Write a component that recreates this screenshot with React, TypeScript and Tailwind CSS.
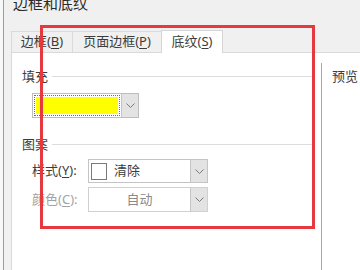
import React from 'react';

const Chevron = () => (
  <svg width="9" height="5" viewBox="0 0 9 5" fill="none">
    <path d="M0.5 0.5L4.5 4.5L8.5 0.5" stroke="#7a7a7a" strokeWidth="1" />
  </svg>
);

const Mn = ({ text, k }: { text: string; k: string }) => (
  <span>
    {text}(<span className="underline underline-offset-2">{k}</span>)
  </span>
);

const GroupHeader = ({ label }: { label: string }) => (
  <div className="flex items-center gap-[4px] pr-[7px]">
    <span className="leading-[18px]">{label}</span>
    <div className="flex-1 h-px bg-[#dcdcdc]" />
  </div>
);

const DropArrow = () => (
  <div className="w-[17px] self-stretch flex items-center justify-center bg-[#e3e3e3] border-l border-[#c4c4c4]">
    <Chevron />
  </div>
);

export default function App() {
  return (
    <div className="relative w-[360px] h-[270px] overflow-hidden bg-[#f0f0f0] text-[13px] text-[#3c3c3c] font-['Noto_Sans','Noto_Sans_CJK_SC',sans-serif] flex">
      {/* window edge */}
      <div className="w-[4px] bg-[#f7f7f7] border-r border-[#9c9c9c]" />

      <div className="flex-1 flex flex-col">
        {/* title */}
        <div className="h-[27px] pl-[9px] text-[15px] leading-[20px] -mt-[7px] text-[#2a2a2a]">
          边框和底纹
        </div>

        {/* tabs */}
        <div className="flex pl-[7px] h-[23px] mt-[9px] items-end">
          <div className="h-[21px] w-[61px] flex items-center justify-center border-t border-l border-[#dadada] bg-[#f0f0f0]">
            <Mn text="边框" k="B" />
          </div>
          <div className="h-[21px] w-[89px] flex items-center justify-center border-t border-l border-[#dadada] bg-[#f0f0f0]">
            <Mn text="页面边框" k="P" />
          </div>
          <div className="h-[23px] w-[62px] flex items-center justify-center border-t border-l border-r border-[#d6d6d6] bg-white -mb-px relative z-10">
            <Mn text="底纹" k="S" />
          </div>
        </div>

        {/* panel */}
        <div className="flex-1 ml-[7px] bg-white border-t border-l border-[#d9d9d9] flex">
          <div className="w-[309px] pl-[10px] pt-[14px] flex flex-col">
            <GroupHeader label="填充" />
            <div className="ml-[10px] mt-[8px] w-[107px] h-[25px] flex items-stretch border border-[#bdbdbd] bg-white">
              <div className="flex-1 p-[1px]">
                <div className="w-full h-full border border-dotted border-[#6f6f6f] p-[1px]">
                  <div className="w-full h-full bg-[#ffff00]" />
                </div>
              </div>
              <DropArrow />
            </div>

            <div className="mt-[17px]">
              <GroupHeader label="图案" />
            </div>

            <div className="ml-[10px] mt-[6px] flex flex-col gap-[4px]">
              <div className="flex items-center">
                <span className="w-[56px]">
                  <Mn text="样式" k="Y" />:
                </span>
                <div className="w-[120px] h-[24px] flex items-stretch border border-[#c4c4c4]">
                  <div className="flex-1 flex items-center pl-[2px] gap-[7px]">
                    <div className="w-[16px] h-[17px] border border-[#7a7a7a] bg-white" />
                    <span>清除</span>
                  </div>
                  <DropArrow />
                </div>
              </div>
              <div className="flex items-center text-[#a3a3a3]">
                <span className="w-[56px]">
                  <Mn text="颜色" k="C" />:
                </span>
                <div className="w-[120px] h-[25px] flex items-stretch border border-[#d0d0d0]">
                  <div className="flex-1 flex items-center justify-center text-[#8a8a8a]">自动</div>
                  <DropArrow />
                </div>
              </div>
            </div>
          </div>

          <div className="mt-[10px] w-px bg-[#a8a8a8]" />
          <div className="pl-[10px] pt-[14px] leading-[18px]">预览</div>
        </div>
      </div>

      {/* red annotation box */}
      <div className="absolute left-[40px] top-[25px] w-[275px] h-[204px] border-[3px] border-[#e5393f]" />
    </div>
  );
}
